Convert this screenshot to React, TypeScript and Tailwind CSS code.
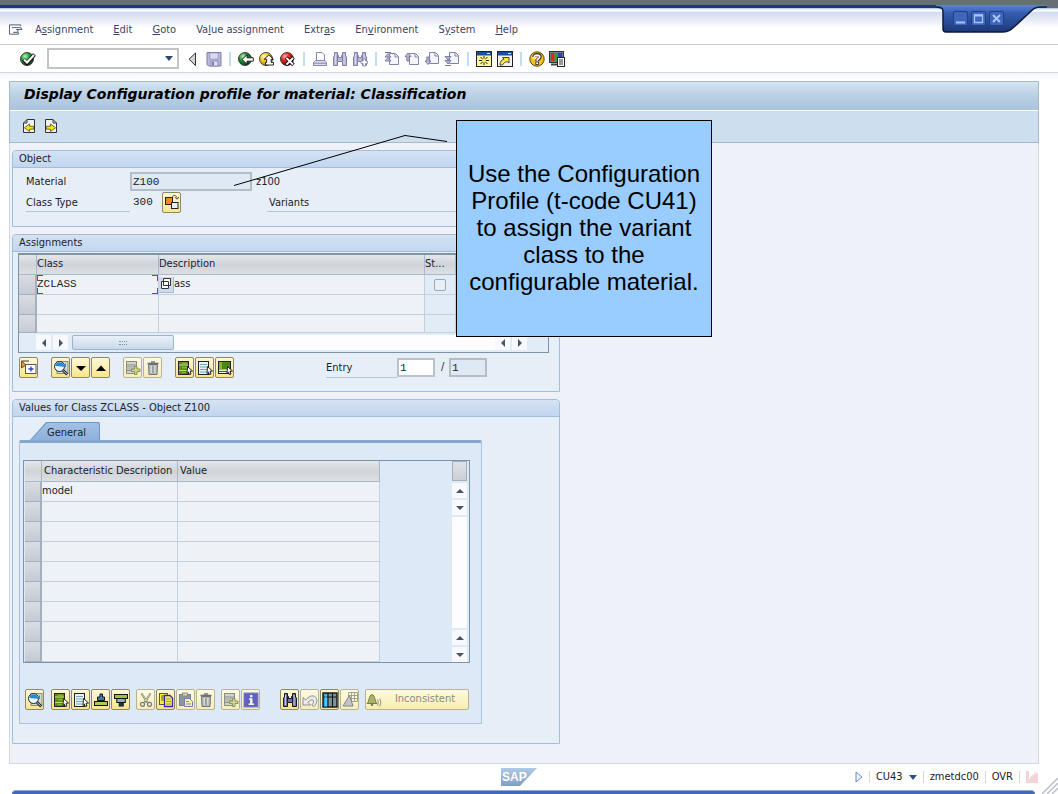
import React from "react";

type Kids = { children: React.ReactNode };

function Icon({ children, w = 16, h = 16 }: Kids & { w?: number; h?: number }) {
  return (
    <svg width={w} height={h} viewBox={`0 0 ${w} ${h}`} aria-hidden="true" className="block shrink-0">
      {children}
    </svg>
  );
}

/* ---------- standard toolbar icons ---------- */

function Ball({ from, mid, to, id, children }: Kids & { from: string; mid: string; to: string; id: string }) {
  return (
    <Icon>
      <defs>
        <radialGradient id={id} cx="0.35" cy="0.3" r="0.75">
          <stop offset="0" stopColor={from} />
          <stop offset="0.45" stopColor={mid} />
          <stop offset="1" stopColor={to} />
        </radialGradient>
      </defs>
      <circle cx="7" cy="8" r="6.5" fill={`url(#${id})`} stroke="#1c1c1c" strokeWidth="0.8" />
      {children}
    </Icon>
  );
}

const CheckIcon = () => (
  <Ball id="ok" from="#b9f0b0" mid="#1f9a3a" to="#033d12">
    <path d="M3.5 8.5 L7 12 L14.5 3.5" fill="none" stroke="#111" strokeWidth="3.8" />
    <path d="M4 8.6 L7 11.4 L14 4" fill="none" stroke="#fff" strokeWidth="2.1" />
  </Ball>
);
const BackIcon = () => (
  <Ball id="back" from="#b9f0b0" mid="#1f8a3a" to="#033d12">
    <path d="M4 8.5 L9 3.8 V6.8 H15.3 V10.2 H9 V13.2 Z" fill="#fff" stroke="#111" strokeWidth="0.9" />
  </Ball>
);
const ExitIcon = () => (
  <Ball id="exit" from="#fffbb0" mid="#f3c522" to="#c07c00">
    <path d="M9.8 4 L14.5 8.2 H12.2 V11.5 H14.5 V14 H6.5 V11.5 H7.6 V8.2 H5.2 Z" fill="#fff" stroke="#111" strokeWidth="0.9" />
  </Ball>
);
const CancelIcon = () => (
  <Ball id="cancel" from="#ffb3a8" mid="#df2020" to="#700606">
    <path d="M6 6.5 L13.5 14 M13.5 6.5 L6 14" stroke="#111" strokeWidth="3.6" />
    <path d="M6.4 6.9 L13.1 13.6 M13.1 6.9 L6.4 13.6" stroke="#fff" strokeWidth="2" />
  </Ball>
);
const CollapseIcon = () => (
  <Icon>
    <path d="M9.5 2 V14.5 L3 8.2 Z" fill="#d4d4d4" stroke="#333" />
  </Icon>
);
const SaveIcon = () => (
  <Icon>
    <path d="M1 1.5 H15 V15 H2.5 L1 13.5 Z" fill="#b9b9dc" stroke="#7c7ca8" />
    <rect x="4" y="2" width="8" height="6" fill="#f1f1fb" stroke="#8c8cb8" strokeWidth="0.8" />
    <path d="M5 4 H11 M5 6 H11" stroke="#b0b0d0" strokeWidth="0.7" />
    <rect x="5" y="10" width="7" height="5" fill="#dedef0" stroke="#7c7ca8" strokeWidth="0.8" />
    <rect x="6" y="11" width="2" height="3.5" fill="#7c7ca8" />
  </Icon>
);
const PrintIcon = () => (
  <Icon>
    <path d="M4.5 9.5 V1.5 H10 L12.5 4 V9.5" fill="#fff" stroke="#8585ad" />
    <path d="M1.5 11.5 L3.5 9.5 H13 L14.5 11.5 V14.5 H1.5 Z" fill="#dcdcee" stroke="#8585ad" />
    <path d="M2 12.2 H14" stroke="#8585ad" />
  </Icon>
);
function Binoculars({ fill, stroke, plus = false }: { fill: string; stroke: string; plus?: boolean }) {
  return (
    <Icon>
      <path
        d="M2.5 1.5 H5.5 V4.5 H6.5 V6.5 H9.5 V4.5 H10.5 V1.5 H13.5 V5 L14.5 6 V14.5 H10.5 V10.5 H5.5 V14.5 H1.5 V6 L2.5 5 Z"
        fill={fill}
        stroke={stroke}
      />
      <path d="M3.5 3 V13 M12 3 V13" stroke="#dcdcf0" strokeWidth="0.8" />
      <path d="M5.5 4.5 V10 M10.5 4.5 V10" stroke={stroke} strokeWidth="1.2" />
      {plus && <path d="M11 8 H13.5 V10 H15.5 V12.5 H13.5 V15 H11 V12.5 H9 V10 H11 Z" fill="#fff" stroke={stroke} strokeWidth="0.8" />}
    </Icon>
  );
}
function PageArrow({ kind }: { kind: "first" | "prev" | "next" | "last" }) {
  const arrows = {
    first: "M1 6 L4 2.5 L7 6 Z M1 10 L4 6.5 L7 10 Z",
    prev: "M1 5.5 L4 2 L7 5.5 H5.2 V10 H2.8 V5.5 Z",
    next: "M1 10 L4 13.5 L7 10 H5.2 V6 H2.8 V10 Z",
    last: "M1 5.5 L4 9 L7 5.5 Z M1 9.5 L4 13 L7 9.5 Z",
  };
  const low = kind === "next" || kind === "last";
  return (
    <Icon>
      <path
        d={low ? "M5.5 1.5 H11.5 L14.5 4.5 V12.5 H5.5 Z" : "M5.5 2.5 H11.5 L14.5 5.5 V13.5 H5.5 Z"}
        fill="#f4f4fb"
        stroke="#8383aa"
      />
      <path d={low ? "M11 2 V5 H14" : "M11 3 V6 H14"} fill="none" stroke="#8383aa" />
      <path d={arrows[kind]} fill="#b9b9d8" stroke="#75759e" strokeWidth="0.9" />
      {kind === "first" && <path d="M1 1.5 H7" stroke="#75759e" />}
      {kind === "last" && <path d="M1 14.5 H7" stroke="#75759e" />}
    </Icon>
  );
}
const SessionIcon = () => (
  <Icon>
    <rect x="0.5" y="0.5" width="15" height="15" fill="#fbf7a0" stroke="#222" />
    <rect x="1" y="1" width="14" height="3.5" fill="#1c4f9c" />
    <path d="M11 2.5 H14" stroke="#dbe8ff" />
    <path d="M8 5 V14 M3 9.5 H13 M4.5 6 L11.5 13 M11.5 6 L4.5 13" stroke="#222" />
    <circle cx="8" cy="9.5" r="2" fill="#fff34a" />
  </Icon>
);
const ShortcutIcon = () => (
  <Icon>
    <rect x="0.5" y="0.5" width="15" height="15" fill="#f2f2f2" stroke="#222" />
    <rect x="1" y="1" width="14" height="3.5" fill="#1c4f9c" />
    <path d="M11 2.5 H14" stroke="#dbe8ff" />
    <path d="M3 14 C3 10.5 4.5 8.7 7 8.2 L5.5 6.5 H12 V12 L10.3 10.7 C8 11 6.5 12 5.5 14 Z" fill="#ffe936" stroke="#222" strokeWidth="0.8" />
  </Icon>
);
const HelpIcon = () => (
  <Icon>
    <circle cx="8" cy="8" r="7.2" fill="#f2c21e" stroke="#5a4300" />
    <circle cx="6" cy="5.5" r="3" fill="#fff07a" />
    <path d="M5 6 C5 2.8 11 2.8 11 6 C11 8 8 8 8 10" fill="none" stroke="#222" strokeWidth="3.4" />
    <path d="M5.3 6 C5.3 3.5 10.7 3.5 10.7 6 C10.7 7.8 8 7.8 8 9.8" fill="none" stroke="#fff" strokeWidth="1.8" />
    <rect x="6.8" y="11" width="2.6" height="2.6" fill="#fff" stroke="#222" strokeWidth="0.8" />
  </Icon>
);
const LayoutIcon = () => (
  <Icon>
    <rect x="0.5" y="0.5" width="14" height="11" fill="#777" stroke="#333" />
    <rect x="2" y="2" width="3.5" height="8" fill="#d42a2a" />
    <rect x="5.5" y="2" width="3.5" height="8" fill="#2ca52c" />
    <rect x="9" y="2" width="4" height="8" fill="#2741c8" />
    <path d="M2 13.5 H9" stroke="#444" strokeWidth="2" />
    <rect x="8.5" y="6.5" width="7" height="9" fill="#fff" stroke="#222" />
    <path d="M10 9 H14 M10 11 H14 M10 13 H14" stroke="#333" />
  </Icon>
);
function DocArrow({ right = false }: { right?: boolean }) {
  return (
    <Icon w={14}>
      <path
        d={right ? "M1.5 1.5 H9 L12.5 5 V14.5 H1.5 Z" : "M12.5 1.5 H5 L1.5 5 V14.5 H12.5 Z"}
        fill="#eef1f4"
        stroke="#333"
      />
      <path d={right ? "M9 1.5 V5 H12.5" : "M5 1.5 V5 H1.5"} fill="none" stroke="#333" />
      <path
        d={right ? "M2.5 8.3 H6.5 V6 L11.5 9.8 L6.5 13.5 V11.2 H2.5 Z" : "M11.5 8.3 H7.5 V6 L2.5 9.8 L7.5 13.5 V11.2 H11.5 Z"}
        fill="#ffe600"
        stroke="#3a3a20"
        strokeWidth="0.7"
      />
    </Icon>
  );
}

/* ---------- push-button icons ---------- */

const Pointer = () => <path d="M10.5 6.5 L15.5 11 L13 11.3 L14 14 L12.3 14.5 L11.5 12.2 L10 13.5 Z" fill="#fff" stroke="#111" strokeWidth="0.9" />;
const DetailIcon = () => (
  <Icon>
    <rect x="4" y="1.5" width="11" height="12" fill="#d5dcc4" stroke="#777" strokeWidth="0.8" />
    <circle cx="6.5" cy="6.5" r="5" fill="#eef8ff" stroke="#223" />
    <path d="M2.3 6 A4.4 4.4 0 0 1 10.7 5 L13 3 V7 Z" fill="#2a86d6" />
    <path d="M9.8 10 L14.2 14.5" stroke="#223" strokeWidth="2.8" />
    <path d="M10 10.3 L13.7 14" stroke="#c9e3f5" strokeWidth="1" />
  </Icon>
);
const DownIcon = () => (
  <Icon>
    <path d="M3 6 H13 L8 11 Z" fill="#000" />
  </Icon>
);
const UpIcon = () => (
  <Icon>
    <path d="M3 11 H13 L8 5.5 Z" fill="#000" />
  </Icon>
);
const TreeIcon = () => (
  <Icon>
    <path d="M0.5 1 V8 L5 5 Z" fill="#f09a1c" stroke="#333" strokeWidth="0.8" />
    <path d="M1 1 H8" stroke="#333" />
    <rect x="4.5" y="4.5" width="10.5" height="9" fill="#fff" stroke="#556" />
    <path d="M10 6.5 V11.5 M7.5 9 H12.5" stroke="#2b3fbe" strokeWidth="1.3" />
  </Icon>
);
const InsertIcon = () => (
  <Icon>
    <rect x="1.5" y="1.5" width="10" height="12" fill="#d0d3cb" stroke="#8a8d88" />
    <path d="M2 5 H11 M2 10.5 H11" stroke="#8a8d88" />
    <rect x="2" y="6" width="9" height="3.5" fill="#b5bcad" />
    <path d="M9.5 6.5 H12 V9 H15 V11.5 H12 V14.5 H9.5 V11.5 H6.5 V9 H9.5 Z" fill="#cfd68d" stroke="#828a58" strokeWidth="0.9" />
  </Icon>
);
const TrashIcon = () => (
  <Icon>
    <path d="M3.5 4.5 H12.5 L12 14.5 H4 Z" fill="#b4b8ba" stroke="#707476" />
    <path d="M2.5 3.5 H13.5" stroke="#6c7072" strokeWidth="1.6" />
    <path d="M6 2 H10" stroke="#6c7072" strokeWidth="1.4" />
    <path d="M6.2 6 V13 M9.8 6 V13" stroke="#e4e6e6" />
    <path d="M8 6 V13" stroke="#85898b" />
  </Icon>
);
const SelectAllIcon = () => (
  <Icon>
    <rect x="1.5" y="1.5" width="10" height="13" fill="#5e8f17" stroke="#222" />
    <path d="M2 5 H11 M2 10.5 H11" stroke="#c4dd74" strokeWidth="1.2" />
    <path d="M5 3.3 H10 M5 7.7 H10 M5 12.5 H10" stroke="#86b430" strokeWidth="1.2" />
    <Pointer />
  </Icon>
);
const DeselectIcon = () => (
  <Icon>
    <rect x="1.5" y="1.5" width="10" height="13" fill="#e6f2fa" stroke="#222" />
    <path d="M3 4.5 H10 M3 7 H10 M3 9.5 H10 M3 12 H10" stroke="#76a3bd" />
    <Pointer />
  </Icon>
);
const BlockIcon = () => (
  <Icon>
    <rect x="1.5" y="1.5" width="12" height="12" fill="#f2f6da" stroke="#222" />
    <rect x="2" y="2" width="11" height="7.5" fill="#4d8a12" />
    <rect x="2" y="2" width="3" height="7.5" fill="#8ab530" />
    <path d="M2 11.5 H10" stroke="#555" />
    <Pointer />
  </Icon>
);
const SortAscIcon = () => (
  <Icon>
    <path d="M7 2 H9.5 V5 H11.5 V8.5 H4.5 V5 H7 Z" fill="#3d7fa8" stroke="#111" />
    <rect x="1.5" y="9.5" width="13" height="4" fill="#b0c858" stroke="#111" />
  </Icon>
);
const SortDescIcon = () => (
  <Icon>
    <rect x="1.5" y="2.5" width="13" height="4" fill="#a4bd48" stroke="#111" />
    <rect x="3.8" y="6.5" width="8.5" height="4" fill="#8eb1c0" stroke="#111" />
    <rect x="6.2" y="10.5" width="4" height="3.5" fill="#123c5c" stroke="#111" />
  </Icon>
);
const CutIcon = () => (
  <Icon>
    <path d="M3.5 1.5 L9.5 10.5 M12.5 1.5 L6.5 10.5" stroke="#7e8068" strokeWidth="2" />
    <path d="M4 2 L9 9.5 M12 2 L7 9.5" stroke="#e2e2b4" strokeWidth="0.8" />
    <circle cx="4.5" cy="12.3" r="2" fill="none" stroke="#75787c" strokeWidth="1.2" />
    <circle cx="11.5" cy="12.3" r="2" fill="none" stroke="#75787c" strokeWidth="1.2" />
  </Icon>
);
const CopyIcon = () => (
  <Icon>
    <rect x="1.5" y="1.5" width="8" height="11" fill="#f6ef42" stroke="#555" />
    <path d="M3 4 H8 M3 6 H8 M3 8 H8" stroke="#555" />
    <path d="M6.5 3.5 H12 L14.5 6 V14.5 H6.5 Z" fill="#f8f05a" stroke="#3a2a9e" strokeWidth="1.3" />
    <path d="M8 7 H13 M8 9.5 H13 M8 12 H13" stroke="#777" strokeWidth="0.8" />
  </Icon>
);
const PasteIcon = () => (
  <Icon>
    <rect x="1.5" y="2.5" width="11" height="11" fill="#8c97a6" stroke="#7a8088" />
    <rect x="4.5" y="1" width="5" height="3" fill="#d5d8a0" stroke="#7a8088" strokeWidth="0.8" />
    <path d="M6.5 6.5 H11.5 L14.5 9.5 V14.5 H6.5 Z" fill="#f3efb5" stroke="#7b7bb0" />
    <path d="M8 9.5 H11 M8 12 H13" stroke="#8c8ca0" />
  </Icon>
);
const InfoIcon = () => (
  <Icon>
    <rect x="1" y="1" width="14" height="14" fill="#6060c0" stroke="#8080c8" />
    <path d="M7 3 H9.5 V5.2 H7 Z M6 6.3 H9.5 V11.5 H11 V13 H5.5 V11.5 H7 V7.8 H6 Z" fill="#f4f4e4" />
  </Icon>
);
const UndoIcon = () => (
  <Icon>
    <path d="M1 5.5 V13 H8.5 L6 10.5 C8 7.5 11 7 11.5 9 C11.8 10.5 10.8 12 9.8 13 L11.8 14.5 C15 11.5 16 8 13.5 5 C10.5 2.5 6.5 4.5 3.8 8 Z" fill="#e9e9ee" stroke="#85858f" strokeWidth="0.9" />
  </Icon>
);
const ColumnsIcon = () => (
  <Icon>
    <rect x="1" y="1" width="14" height="14" fill="#7d949c" stroke="#111" strokeWidth="1.4" />
    <rect x="2" y="2" width="3.5" height="12.5" fill="#18aef0" />
    <path d="M6 1 V15 M10.5 1 V15 M2 5 H14.5" stroke="#111" strokeWidth="1.1" />
    <path d="M4 3.2 V14" stroke="#b8ecff" strokeWidth="0.8" />
  </Icon>
);
const ChartIcon = () => (
  <Icon>
    <path d="M6.5 0.5 H15.5 V9.5 H6.5 Z M6.5 3.5 H15.5 M6.5 6.5 H15.5 M9.5 0.5 V9.5 M12.5 0.5 V9.5" fill="#fbf6d2" stroke="#9c9c88" strokeWidth="0.9" />
    <path d="M1 14 L7.5 3.5 L11 14 Z" fill="#c4c4c6" stroke="#85858a" />
  </Icon>
);
const BellIcon = () => (
  <Icon>
    <path d="M1 11.5 C3.5 9.5 2.5 3.5 6 2.5 C9.5 3.5 8.5 9.5 11 11.5 Z" fill="#a9b562" stroke="#777c50" />
    <circle cx="6" cy="12.8" r="1.3" fill="#777c50" />
    <path d="M11.5 7.5 Q13 10.5 11.5 13.5 M13.7 6.5 Q16 10.5 13.7 14.5" fill="none" stroke="#8f8f86" />
  </Icon>
);
const HierarchyIcon = () => (
  <Icon>
    <rect x="1.5" y="3.5" width="7" height="7" fill="#f08a12" stroke="#222" />
    <rect x="7.5" y="8.5" width="6.5" height="6" fill="#e6f1ff" stroke="#222" />
    <path d="M8 3.5 C9 0.8 12.5 1 13 3.5 M11 3.2 L13 5.2 L15 3" fill="none" stroke="#444" />
  </Icon>
);

function PushButton({ label, dim = false, children }: Kids & { label: string; dim?: boolean }) {
  return (
    <button
      type="button"
      aria-label={label}
      className={
        dim
          ? "flex h-[21px] w-[19px] items-center justify-center rounded-xs border border-[#b9b394] bg-linear-to-b from-[#fdfae4] to-[#f6edbb]"
          : "flex h-[21px] w-[19px] items-center justify-center rounded-xs border border-[#8f8868] bg-linear-to-b from-[#fdf8d6] to-[#fae58c]"
      }
    >
      {children}
    </button>
  );
}

function ToolButton({ label, children }: Kids & { label: string }) {
  return (
    <button type="button" aria-label={label} className="block shrink-0">
      {children}
    </button>
  );
}

const Sep = () => <span className="mx-[7px] h-3.5 w-0.5 shrink-0 bg-[#c3dcef]" />;

function Arrow({ dir }: { dir: "up" | "down" | "left" | "right" }) {
  const d = { up: "M0 6 L4 2 L8 6 Z", down: "M0 2 H8 L4 6 Z", left: "M6 0 V8 L2 4 Z", right: "M2 0 V8 L6 4 Z" };
  return (
    <button type="button" aria-label={`Scroll ${dir}`} className="flex h-[15px] w-[15px] items-center justify-center bg-[#f8f9ff]">
      <svg width="8" height="8" viewBox="0 0 8 8" aria-hidden="true">
        <path d={d[dir]} fill="#46545f" />
      </svg>
    </button>
  );
}

function Group({ title, children }: Kids & { title: string }) {
  return (
    <section className="rounded-t-sm border border-[#a3bedb] bg-[#e6eff8]">
      <h2 className="h-[17px] rounded-t-sm border-b border-[#a3bedb] bg-linear-to-b from-[#d5e3f3] to-[#c1d6ef] pl-1.5 leading-4">{title}</h2>
      {children}
    </section>
  );
}

const menus: [string, string, string][] = [
  ["A", "s", "signment"],
  ["", "E", "dit"],
  ["", "G", "oto"],
  ["Va", "l", "ue assignment"],
  ["Extr", "a", "s"],
  ["En", "v", "ironment"],
  ["S", "y", "stem"],
  ["", "H", "elp"],
];

const headCell = "border-r border-b border-[#a9b9c8] bg-linear-to-b from-[#e4e6ea] via-[#cfd4da] to-[#dcdfe3] p-0 text-left font-normal";
const rowHead = "border-r-2 border-b border-[#a4b0be] bg-linear-to-b from-[#d9dde3] to-[#c5cbd3] p-0";
const cell = "border-r border-b border-[#c2d0dd] bg-[#eef2f7] p-0";

function WindowControls() {
  return (
    <div className="absolute top-[5px] right-0 h-8 w-[122px]">
      <svg width="122" height="32" viewBox="0 0 122 32" aria-hidden="true" className="absolute inset-0">
        <defs>
          <linearGradient id="cap" x1="0" y1="0" x2="0" y2="1">
            <stop offset="0" stopColor="#5c84d8" />
            <stop offset="0.3" stopColor="#365cb0" />
            <stop offset="1" stopColor="#1c3878" />
          </linearGradient>
        </defs>
        <path d="M111 0 H122 V3 H111 Z" fill="#666f76" />
        <path d="M0 0 H111 V3 H104 C98 3 96 5 92 9 L78 22 C74 26 71 27 66 27 H10 Q7 27 7 24 V6 Q7 3 0 3 Z" fill="url(#cap)" />
        <path d="M111 2 H104 C98 2 96 5 92 9 L78 22 C74 26 71 27 66 27 H10 Q7 27 7 24 V6 Q7 2 0 2" fill="none" stroke="#0d1a3a" strokeWidth="1.5" />
      </svg>
      <div className="absolute top-[6px] left-[17px] flex gap-[3px]">
        {["Minimize", "Maximize", "Close"].map((name) => (
          <button key={name} type="button" aria-label={name} className="flex h-[15px] w-[15px] items-center justify-center rounded-xs border border-[#1f3f88] bg-[#3f66ba]">
            <svg width="11" height="11" viewBox="0 0 11 11" aria-hidden="true" fill="none" stroke="#a9c4ff" strokeWidth="2">
              {name === "Minimize" && <path d="M1 9.5 H10" />}
              {name === "Maximize" && <path d="M1.5 9.5 V2 H9.5 V9.5 Z" strokeWidth="1.3" />}
              {name === "Maximize" && <path d="M1 2.5 H10" />}
              {name === "Close" && <path d="M2 2 L9 9 M9 2 L2 9" />}
            </svg>
          </button>
        ))}
      </div>
    </div>
  );
}

export default function App() {
  return (
    <div className="relative flex min-h-screen flex-col bg-white font-['DejaVu_Sans_Condensed','DejaVu_Sans',sans-serif] text-[11px] text-[#1d2126]">
      <div className="h-[5px] bg-[#666f76]" />
      <div className="h-[3px] bg-[#1e3a6c]" />
      <div className="h-1 bg-linear-to-b from-[#a9bfe0] via-white to-[#e9eef9]" />
      <WindowControls />

      <nav aria-label="Menu bar" className="flex h-[33px] items-center gap-5 border-b border-[#c9cbd3] bg-linear-to-b from-[#d3daef] via-white to-white pt-1 pl-[9px] text-[#3a4566]">
        <button type="button" aria-label="Window menu" className="-mr-2">
          <svg width="14" height="12" viewBox="0 0 15 12" aria-hidden="true" fill="none" stroke="#4a5570">
            <path d="M12.5 2 V0.5 H0.5 V10.5 H10 V8.5" />
            <path d="M3 3.5 H11.5 Q14 3.5 14 5.5 H8 M8 5.5 H9.5 V8.5 H4.5" />
          </svg>
        </button>
        {menus.map(([a, b, c]) => (
          <button key={a + b + c} type="button" className="whitespace-nowrap">
            {a}
            <u>{b}</u>
            {c}
          </button>
        ))}
      </nav>

      <div role="toolbar" aria-label="Standard toolbar" className="flex h-7 items-center border-b border-[#d5d6e0] pl-5">
        <ToolButton label="Enter"><CheckIcon /></ToolButton>
        <div className="mr-[7px] ml-[11px] flex h-[21px] w-[132px] items-center border-2 border-[#c3c3c8] bg-white">
          <input aria-label="Command" className="h-4 w-full min-w-0 bg-transparent px-1 outline-none" />
          <button type="button" aria-label="Command history" className="px-1">
            <svg width="8" height="5" viewBox="0 0 8 5" aria-hidden="true"><path d="M0 0 H8 L4 5 Z" fill="#2f456f" /></svg>
          </button>
        </div>
        <div className="flex gap-1">
          <ToolButton label="Hide command field"><CollapseIcon /></ToolButton>
          <ToolButton label="Save"><SaveIcon /></ToolButton>
        </div>
        <Sep />
        <div className="flex gap-[5px]">
          <ToolButton label="Back"><BackIcon /></ToolButton>
          <ToolButton label="Exit"><ExitIcon /></ToolButton>
          <ToolButton label="Cancel"><CancelIcon /></ToolButton>
        </div>
        <Sep />
        <div className="flex gap-1">
          <ToolButton label="Print"><PrintIcon /></ToolButton>
          <ToolButton label="Find"><Binoculars fill="#b9b9da" stroke="#7f7fa8" /></ToolButton>
          <ToolButton label="Find next"><Binoculars fill="#b9b9da" stroke="#7f7fa8" plus /></ToolButton>
        </div>
        <Sep />
        <div className="flex gap-1">
          <ToolButton label="First page"><PageArrow kind="first" /></ToolButton>
          <ToolButton label="Previous page"><PageArrow kind="prev" /></ToolButton>
          <ToolButton label="Next page"><PageArrow kind="next" /></ToolButton>
          <ToolButton label="Last page"><PageArrow kind="last" /></ToolButton>
        </div>
        <Sep />
        <div className="flex gap-[5px]">
          <ToolButton label="New session"><SessionIcon /></ToolButton>
          <ToolButton label="Create shortcut"><ShortcutIcon /></ToolButton>
        </div>
        <Sep />
        <div className="flex gap-1">
          <ToolButton label="Help"><HelpIcon /></ToolButton>
          <ToolButton label="Customize layout"><LayoutIcon /></ToolButton>
        </div>
      </div>
      <div className="h-2 bg-linear-to-b from-[#f4f5fc] to-white" />

      <main className="mr-[19px] ml-[9px] flex-1 border border-[#cfd9e4] bg-[#eef1f7]">
        <div className="-mx-px -mt-px border border-[#a9b9cc]">
          <h1 className="flex h-[29px] items-center border-b border-white bg-linear-to-b from-[#d5e4f1] via-[#b9d0e3] to-[#aac3df] pb-1 pl-3.5 font-['DejaVu_Sans',sans-serif] text-[14px] font-bold text-black italic">
            Display Configuration profile for material: Classification
          </h1>
          <div className="flex h-[31px] items-center gap-2 bg-[#cddeee] pb-0.5 pl-3">
            <ToolButton label="Previous object"><DocArrow /></ToolButton>
            <ToolButton label="Next object"><DocArrow right /></ToolButton>
          </div>
        </div>

        <div className="ml-0.5 flex w-[548px] flex-col gap-[7px] pt-[7px] pb-[18px]">
          <Group title="Object">
            <div className="grid h-[58px] grid-cols-[104px_122px_1fr] content-start pt-1 pl-[13px]">
              <label htmlFor="material" className="leading-5">Material</label>
              <input id="material" readOnly defaultValue="Z100" className="h-[19px] border-2 border-[#b4bcc6] bg-[#dfe9f4] px-px font-['Liberation_Mono',monospace] text-[11px] outline-none" />
              <span className="pl-1 leading-5">z100</span>
              <span className="h-5 border-b border-[#b8c4d0] leading-[21px]">Class Type</span>
              <div className="flex h-5 items-center">
                <span className="w-8 pl-[3px] font-['Liberation_Mono',monospace]">300</span>
                <PushButton label="Change class type"><HierarchyIcon /></PushButton>
              </div>
              <span className="ml-[15px] h-5 border-b border-[#b8c4d0] pl-0.5 leading-[21px]">Variants</span>
            </div>
          </Group>

          <Group title="Assignments">
            <div className="pt-px pr-2.5 pb-[13px] pl-[5px]">
              <div className="border border-t-2 border-[#7c93a8] bg-[#e2ecf7]">
                <table className="w-[509px] table-fixed border-separate border-spacing-0">
                  <colgroup>
                    <col className="w-[18px]" />
                    <col className="w-[122px]" />
                    <col className="w-[266px]" />
                    <col className="w-[31px]" />
                    <col />
                  </colgroup>
                  <thead>
                    <tr className="h-5">
                      <th className={headCell} />
                      <th className={headCell}>Class</th>
                      <th className={headCell}>Description</th>
                      <th className={headCell}>St...</th>
                      <th className={headCell} />
                    </tr>
                  </thead>
                  <tbody>
                    <tr className="h-5">
                      <td className={rowHead} />
                      <td className={cell}>
                        <div className="relative flex h-[19px] items-center font-['Liberation_Mono',monospace]">
                          ZCLASS
                          <span className="absolute top-0 left-0 h-1.5 w-1.5 border-t border-l border-[#d42a2a]" />
                          <span className="absolute bottom-0 left-0 h-1.5 w-1.5 border-b border-l border-[#d42a2a]" />
                          <span className="absolute top-0 right-0 h-1.5 w-1.5 border-t border-r border-[#d42a2a]" />
                          <span className="absolute right-0 bottom-0 h-1.5 w-1.5 border-r border-b border-[#d42a2a]" />
                        </div>
                      </td>
                      <td className={cell}>
                        <div className="flex items-center">
                          <button type="button" aria-label="Possible entries" className="flex h-4 w-[15px] items-center justify-center border-r border-b border-[#a9b8d4] bg-[#cfdaec]">
                            <svg width="12" height="12" viewBox="0 0 12 12" aria-hidden="true">
                              <path d="M3.5 0.5 H10.5 V7.5 H3.5 Z M1.5 3.5 H8.5 V10.5 H1.5 Z" fill="#fff" stroke="#333" />
                            </svg>
                          </button>
                          ass
                        </div>
                      </td>
                      <td className="border-r border-b border-[#c2d0dd] p-0">
                        <input type="checkbox" aria-label="Status" className="mx-auto block h-3 w-3 appearance-none rounded-xs border border-[#9ca8b4] bg-[#e8eff7]" />
                      </td>
                      <td className={cell} />
                    </tr>
                    {[0, 1].map((r) => (
                      <tr key={r} className={r ? "h-[18px]" : "h-5"}>
                        <td className={rowHead} />
                        <td className={cell} />
                        <td className={cell} />
                        <td className="border-r border-b border-[#c2d0dd] p-0" />
                        <td className={cell} />
                      </tr>
                    ))}
                  </tbody>
                </table>
                <div className="mt-0.5 mb-0.5 flex h-[15px] items-center pl-[17px]">
                  <Arrow dir="left" />
                  <span className="w-0.5" />
                  <Arrow dir="right" />
                  <div className="ml-1 flex h-[15px] w-[102px] items-center justify-center rounded-xs border border-[#9fb4ca] bg-linear-to-b from-[#e9f1fa] to-[#c9d9ea]">
                    <span className="h-1 w-2 border-y border-dotted border-[#7f93a8]" />
                  </div>
                  <div className="h-[15px] flex-1 bg-[#fdfcff]" />
                  <Arrow dir="left" />
                  <span className="w-0.5" />
                  <Arrow dir="right" />
                  <span className="w-[21px]" />
                </div>
              </div>
              <div className="mt-1 flex items-center pl-px">
                <PushButton label="Allocate"><TreeIcon /></PushButton>
                <div className="ml-[13px] flex gap-px">
                  <PushButton label="Details"><DetailIcon /></PushButton>
                  <PushButton label="Next class"><DownIcon /></PushButton>
                  <PushButton label="Previous class"><UpIcon /></PushButton>
                </div>
                <div className="ml-[13px] flex gap-px">
                  <PushButton label="Insert row" dim><InsertIcon /></PushButton>
                  <PushButton label="Delete row" dim><TrashIcon /></PushButton>
                </div>
                <div className="ml-[13px] flex gap-px">
                  <PushButton label="Select all"><SelectAllIcon /></PushButton>
                  <PushButton label="Deselect all"><DeselectIcon /></PushButton>
                  <PushButton label="Select block"><BlockIcon /></PushButton>
                </div>
                <label htmlFor="entry" className="ml-[92px] h-5 w-[71px] border-b border-[#b8c4d0] leading-5">Entry</label>
                <input id="entry" readOnly defaultValue="1" className="h-[19px] w-[38px] border-2 border-[#bcc2ca] bg-white px-px font-['Liberation_Mono',monospace] outline-none" />
                <span className="w-3.5 pl-1.5">/</span>
                <input aria-label="Entry count" readOnly defaultValue="1" className="h-[19px] w-[38px] border-2 border-[#b4bcc6] bg-[#dfe9f4] px-px font-['Liberation_Mono',monospace] outline-none" />
              </div>
            </div>
          </Group>

          <Group title="Values for Class ZCLASS - Object Z100">
            <div className="pt-[5px] pr-[77px] pb-[19px] pl-1.5">
              <div role="tablist" className="pl-[11px]">
                <button
                  type="button"
                  role="tab"
                  aria-selected="true"
                  className="block h-[18px] w-[70px] rounded-tr-xs bg-[#6f98c2] pt-px pr-px [clip-path:polygon(16px_0,100%_0,100%_100%,0_100%)]"
                >
                  <span className="block h-full rounded-tr-xs bg-linear-to-b from-[#a3c0e4] to-[#8db1dc] pl-1 text-center leading-[19px] [clip-path:polygon(17px_0,100%_0,100%_100%,1px_100%)]">General</span>
                </button>
              </div>
              <div role="tabpanel" className="rounded-t-xs border border-t-[3px] border-[#a9c3e0] border-t-[#86a8cd] bg-[#dde9f6] px-[3px] pt-[17px] pb-[13px]">
                <div className="mr-2 flex justify-between border border-[#7c93a8] pl-px">
                  <table className="w-[355px] table-fixed border-separate border-spacing-0">
                    <colgroup>
                      <col className="w-[17px]" />
                      <col className="w-[136px]" />
                      <col />
                    </colgroup>
                    <thead>
                      <tr className="h-[21px]">
                        <th className={headCell} />
                        <th className={headCell + " pl-0.5 whitespace-nowrap"}>Characteristic Description</th>
                        <th className={headCell + " pl-0.5"}>Value</th>
                      </tr>
                    </thead>
                    <tbody>
                      {["model", "", "", "", "", "", "", "", ""].map((text, i) => (
                        <tr key={i} className="h-5">
                          <td className={rowHead} />
                          <td className={cell}>{text}</td>
                          <td className={cell} />
                        </tr>
                      ))}
                    </tbody>
                  </table>
                  <div className="mr-0.5 flex w-[15px] flex-col">
                    <button type="button" aria-label="Table settings" className="h-5 border border-[#a4afbb] bg-linear-to-b from-[#e0e2e6] to-[#cbd0d6]" />
                    <div className="mt-0.5"><Arrow dir="up" /></div>
                    <div className="mt-0.5"><Arrow dir="down" /></div>
                    <div className="my-0.5 flex-1 bg-[#fdfcff]" />
                    <Arrow dir="up" />
                    <div className="mt-0.5"><Arrow dir="down" /></div>
                  </div>
                </div>
                <div className="mt-[26px] flex items-center pl-0.5">
                  <PushButton label="Display details"><DetailIcon /></PushButton>
                  <div className="ml-[7px] flex gap-px">
                    <PushButton label="Select all values"><SelectAllIcon /></PushButton>
                    <PushButton label="Deselect all values"><DeselectIcon /></PushButton>
                    <PushButton label="Sort ascending"><SortAscIcon /></PushButton>
                    <PushButton label="Sort descending"><SortDescIcon /></PushButton>
                  </div>
                  <div className="ml-1.5 flex gap-px">
                    <PushButton label="Cut" dim><CutIcon /></PushButton>
                    <PushButton label="Copy"><CopyIcon /></PushButton>
                    <PushButton label="Paste" dim><PasteIcon /></PushButton>
                    <PushButton label="Delete" dim><TrashIcon /></PushButton>
                  </div>
                  <div className="ml-1.5 flex gap-px">
                    <PushButton label="Insert line" dim><InsertIcon /></PushButton>
                    <PushButton label="Information" dim><InfoIcon /></PushButton>
                  </div>
                  <div className="ml-5 flex gap-px">
                    <PushButton label="Find value"><Binoculars fill="#7878a8" stroke="#16162a" /></PushButton>
                    <PushButton label="Undo" dim><UndoIcon /></PushButton>
                    <PushButton label="Columns"><ColumnsIcon /></PushButton>
                    <PushButton label="Chart" dim><ChartIcon /></PushButton>
                  </div>
                  <button type="button" className="ml-1.5 flex h-[21px] w-[104px] items-center rounded-xs border border-[#b9b394] bg-linear-to-b from-[#fdfae0] to-[#f8edae] text-[#8c8c80]">
                    <BellIcon />
                    <span className="flex-1 text-center">Inconsistent</span>
                  </button>
                </div>
              </div>
            </div>
          </Group>
        </div>
      </main>

      <footer className="flex h-[26px] items-center">
        <div className="flex-1" />
        <svg width="36" height="18" viewBox="0 0 36 18" role="img" aria-label="SAP">
          <defs>
            <linearGradient id="sap" x1="0" y1="0" x2="0" y2="1">
              <stop offset="0" stopColor="#aecbe6" />
              <stop offset="1" stopColor="#7f9fc6" />
            </linearGradient>
          </defs>
          <path d="M0 0 H36 L19 18 H0 Z" fill="url(#sap)" />
          <text x="1" y="13" fill="#fff" fontFamily="Liberation Sans, sans-serif" fontSize="12" fontWeight="bold">SAP</text>
        </svg>
        <div className="flex flex-1 items-center justify-end gap-1.5 pr-5">
          <button type="button" aria-label="Show status">
            <svg width="8" height="12" viewBox="0 0 8 12" aria-hidden="true"><path d="M1 1 L7 6 L1 11 Z" fill="#eaf3fb" stroke="#6a8fb8" /></svg>
          </button>
          <span className="h-3 w-px bg-[#d5d7dc]" />
          <button type="button" className="flex items-center gap-1.5">
            CU43
            <svg width="8" height="5" viewBox="0 0 8 5" aria-hidden="true"><path d="M0 0 H8 L4 5 Z" fill="#2f4f7f" /></svg>
          </button>
          <span className="h-3 w-px bg-[#d5d7dc]" />
          <span>zmetdc00</span>
          <span className="h-3 w-px bg-[#d5d7dc]" />
          <span>OVR</span>
          <span className="h-3 w-px bg-[#d5d7dc]" />
          <svg width="12" height="13" viewBox="0 0 12 13" aria-hidden="true">
            <path d="M0 0 H3 V8 L12 1 V12 H0 Z" fill="#f3d3d6" />
            <path d="M4 7 L10 1" stroke="#d6dbe2" />
          </svg>
        </div>
      </footer>
      <div className="mr-[23px] ml-3 h-1 rounded-t-lg border-t border-[#8fa9dd] bg-[#4068bb]" />
      <svg width="17" height="17" viewBox="0 0 17 17" aria-hidden="true" className="absolute right-0 bottom-0">
        <path d="M1 17 L17 1 M6 17 L17 6 M11 17 L17 11" stroke="#b4b8c4" strokeWidth="1.3" />
      </svg>

      <svg width="216" height="54" viewBox="0 0 216 54" aria-hidden="true" className="pointer-events-none absolute top-[133px] left-[233px]">
        <path d="M1 52.5 L172 2.5 L214 8.5" fill="none" stroke="#000" />
      </svg>
      <aside className="absolute top-[120px] left-[456px] flex h-[217px] w-64 items-center justify-center border border-black bg-[#99ccff] px-1.5 pb-0.5 text-center font-['Liberation_Sans',sans-serif] text-[24px] leading-[27px] text-black">
        Use the Configuration Profile (t-code CU41) to assign the variant class to the configurable material.
      </aside>
    </div>
  );
}
